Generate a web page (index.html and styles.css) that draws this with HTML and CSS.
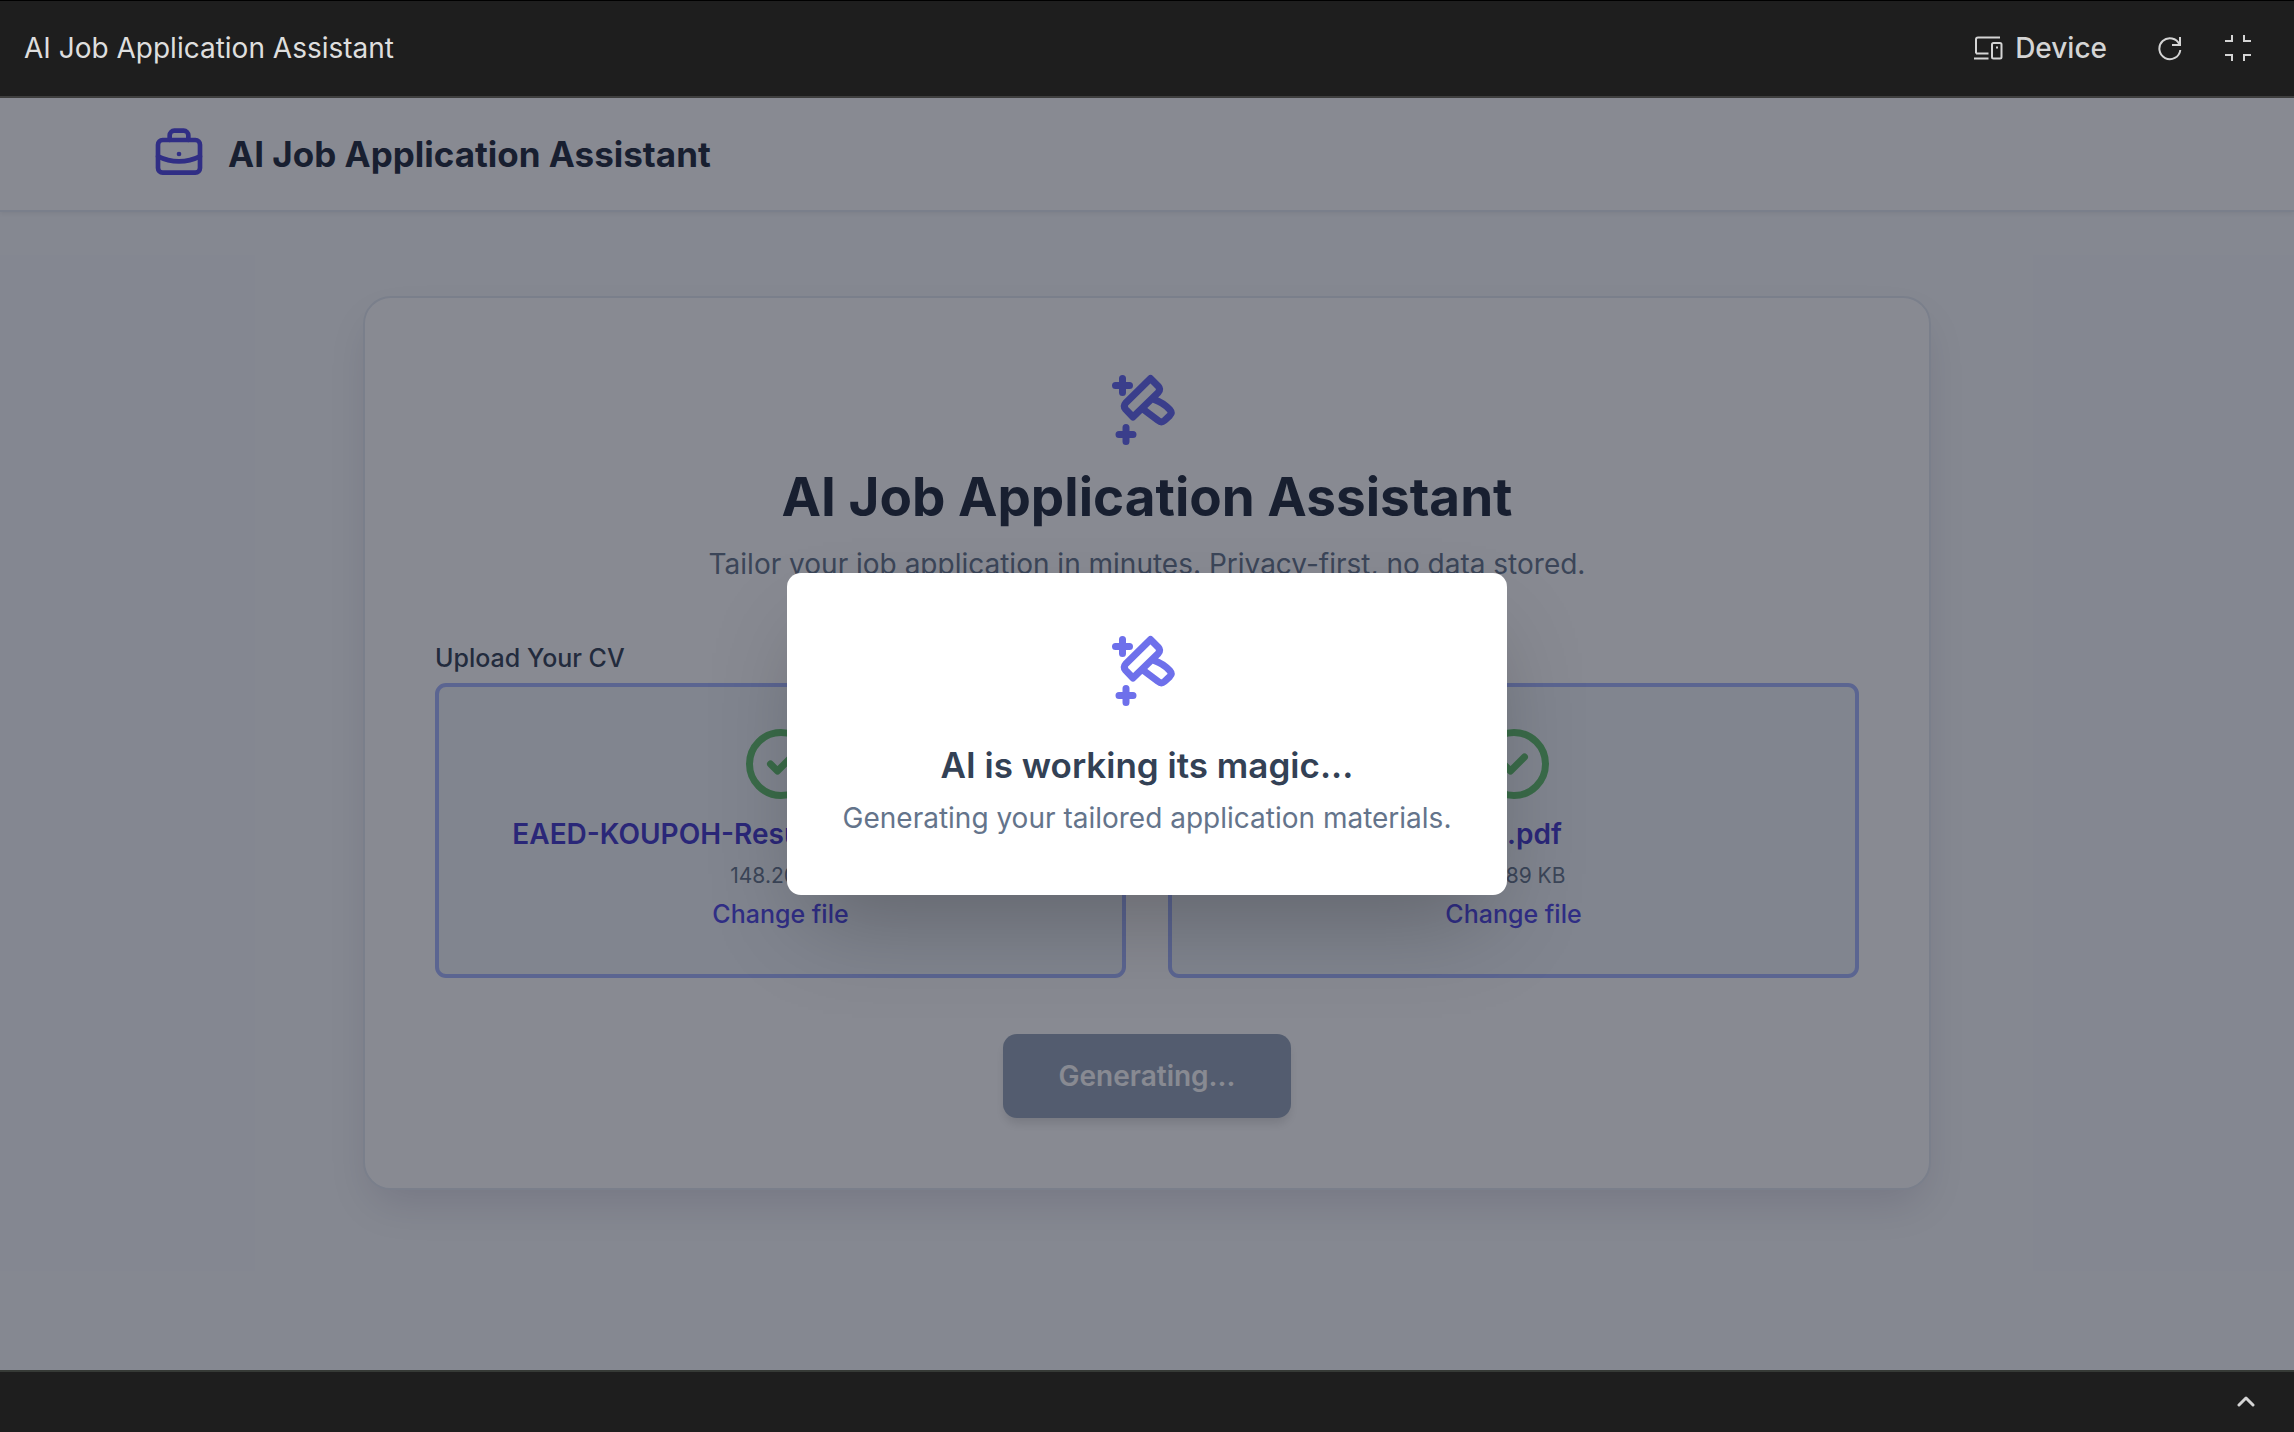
FILE: index.html
```html
<!DOCTYPE html>
<html lang="en">
<head>
<meta charset="utf-8">
<meta name="viewport" content="width=device-width, initial-scale=1">
<title>AI Job Application Assistant</title>
<link rel="stylesheet" href="styles.css">
</head>
<body>
<svg class="defs" aria-hidden="true">
  <symbol id="wand" viewBox="0 0 24 24">
    <path d="M5 3v4M3 5h4M6 17v4M4 19h4M13 3l2.2 2.2q.8.9 0 1.8L8 14l-2.1-2.2q-.8-.9 0-1.8ZM14 9q2.7.9 4.500 2.900q.8.9 0 1.700l-1.500 1.400q-.9.800-1.800 0L11.200 12"/>
  </symbol>
  <symbol id="check" viewBox="0 0 24 24">
    <circle cx="12" cy="12" r="9"/><path d="M9 12l2 2 4-4"/>
  </symbol>
</svg>

<div class="window-bar">
  <span class="window-title">AI Job Application Assistant</span>
  <div class="window-tools">
    <button class="tool device-tool" type="button">
      <svg class="tool-icon device-icon" viewBox="0 0 30 26"><path d="M3 18.500V4.500q0-2 2-2H27M1 23.500H15.500M3 18.500H15.500"/><rect x="19" y="8" width="9.500" height="15.500" rx="1.500"/><path d="M24 11.500v2"/></svg>
      <span>Device</span>
    </button>
    <button class="tool" type="button" aria-label="Reload">
      <svg class="tool-icon" viewBox="0 0 26 26"><path d="M23 2v8h-8M22.500 9.500A10.500 10.500 0 1 0 23.300 15"/></svg>
    </button>
    <button class="tool" type="button" aria-label="Exit full screen">
      <svg class="tool-icon" viewBox="0 0 26 26"><path d="M7 0v6H0M19 0v6h7M7 26v-6H0M19 26v-6h7"/></svg>
    </button>
  </div>
</div>

<div class="preview">
  <header class="site-header">
    <div class="site-brand">
      <svg class="brand-icon" viewBox="0 0 24 24"><rect x="3" y="6" width="18" height="14" rx="2"/><path d="M8 6V4a2 2 0 0 1 2-2h4a2 2 0 0 1 2 2v2M12 12h.01M3 13a20 20 0 0 0 18 0"/></svg>
      <span class="brand-name">AI Job Application Assistant</span>
    </div>
  </header>

  <main class="page">
    <section class="card">
      <div class="intro">
        <svg class="icon-large"><use href="#wand"/></svg>
        <h1 class="intro-title">AI Job Application Assistant</h1>
        <p class="intro-text">Tailor your job application in minutes. Privacy-first, no data stored.</p>
      </div>
      <div class="uploads">
        <div class="upload">
          <h2 class="upload-label">Upload Your CV</h2>
          <div class="dropzone">
            <svg class="icon-large check-icon"><use href="#check"/></svg>
            <p class="file-name">EAED-KOUPOH-Resume-2025-new.pdf</p>
            <p class="file-size">148.20 KB</p>
            <button class="change-file" type="button">Change file</button>
          </div>
        </div>
        <div class="upload">
          <h2 class="upload-label">Job Offer</h2>
          <div class="dropzone">
            <svg class="icon-large check-icon"><use href="#check"/></svg>
            <p class="file-name">job.pdf</p>
            <p class="file-size">248.89 KB</p>
            <button class="change-file" type="button">Change file</button>
          </div>
        </div>
      </div>
      <button class="generate" type="button" disabled>Generating...</button>
    </section>
  </main>

  <div class="overlay">
    <div class="modal" role="dialog" aria-labelledby="modal-title">
      <svg class="icon-large modal-icon"><use href="#wand"/></svg>
      <h2 class="modal-title" id="modal-title">AI is working its magic...</h2>
      <p class="modal-text">Generating your tailored application materials.</p>
    </div>
  </div>
</div>

<div class="console-bar">
  <button class="tool" type="button" aria-label="Open console">
    <svg class="chevron-icon" viewBox="0 0 18 12"><path d="M2 10l7-7 7 7"/></svg>
  </button>
</div>
</body>
</html>
```
FILE: styles.css
```css
* {
  box-sizing: border-box;
}

body {
  margin: 0;
  min-height: 100vh;
  display: flex;
  flex-direction: column;
  font-family: Inter, "Liberation Sans", sans-serif;
  font-size: 28px;
  line-height: 42px;
  color: #1e293b;
  background: #1e1e1e;
}

h1, h2, p {
  margin: 0;
}

button {
  font: inherit;
  border: 0;
  padding: 0;
  background: none;
}

svg {
  display: block;
  flex: none;
  fill: none;
  stroke: currentColor;
  stroke-width: 2;
  stroke-linecap: round;
  stroke-linejoin: round;
}

.defs {
  position: absolute;
  width: 0;
  height: 0;
}

/* Window chrome */
.window-bar {
  height: 98px;
  display: flex;
  align-items: center;
  justify-content: space-between;
  padding: 0 43px 2px 24px;
  border-top: 1px solid #000;
  border-bottom: 2px solid #3f3f3f;
  color: #dedede;
}

.window-tools {
  display: flex;
  align-items: center;
  gap: 42px;
}

.tool {
  display: flex;
  align-items: center;
  gap: 12px;
  color: #d4d4d4;
  font-weight: 500;
}

.device-tool {
  margin-right: 8px;
}

.tool-icon {
  width: 26px;
  height: 26px;
  stroke-linecap: butt;
  stroke-linejoin: miter;
}

.device-icon {
  width: 30px;
}

.console-bar {
  height: 62px;
  display: flex;
  align-items: center;
  justify-content: flex-end;
  padding: 0 39px 2px;
  border-top: 2px solid #363a36;
}

.chevron-icon {
  width: 18px;
  height: 12px;
  stroke-width: 3;
}

/* Application */
.preview {
  position: relative;
  flex: 1;
  display: flex;
  flex-direction: column;
  background: #f8fafc;
}

.site-header {
  padding: 28px;
  background: #fff;
  border-bottom: 2px solid #e2e8f0;
  box-shadow: 0 2px 4px rgb(0 0 0 / 6%);
}

.site-brand {
  max-width: 1992px;
  margin: 0 auto;
  display: flex;
  align-items: center;
  gap: 21px;
}

.brand-icon {
  width: 56px;
  height: 56px;
  color: #4f46e5;
}

.brand-name {
  font-size: 35px;
  line-height: 49px;
  font-weight: 700;
}

.page {
  padding: 84px 28px;
}

.card {
  max-width: 1568px;
  margin: 0 auto;
  padding: 70px;
  display: flex;
  flex-direction: column;
  gap: 56px;
  background: #fff;
  border: 2px solid #e2e8f0;
  border-radius: 28px;
  box-shadow: 0 20px 44px -9px rgb(30 0 60 / 14%);
}

.icon-large {
  width: 84px;
  height: 84px;
  color: #6366f1;
}

.intro {
  display: flex;
  flex-direction: column;
  align-items: center;
  gap: 14px;
  text-align: center;
}

.intro-title {
  font-size: 53px;
  line-height: 63px;
  font-weight: 700;
}

.intro-text {
  color: #64748b;
}

.uploads {
  display: grid;
  grid-template-columns: 1fr 1fr;
  gap: 42px;
}

.upload-label {
  margin-bottom: 7px;
  font-size: 25px;
  line-height: 35px;
  font-weight: 500;
  color: #334155;
}

.dropzone {
  display: flex;
  flex-direction: column;
  align-items: center;
  gap: 7px;
  padding: 35px 28px 42px;
  background: #f1f5f9;
  border: 4px solid #a5b4fc;
  border-radius: 11px;
}

.check-icon {
  color: #62c16c;
}

.file-name {
  font-weight: 600;
  color: #4338ca;
}

.file-size {
  font-size: 21px;
  line-height: 28px;
  color: #64748b;
}

.change-file {
  font-size: 25px;
  line-height: 35px;
  font-weight: 500;
  color: #4f46e5;
}

.generate {
  align-self: center;
  padding: 21px 56px;
  font-weight: 600;
  color: #fff;
  background: #94a3b8;
  border-radius: 14px;
  box-shadow: 0 7px 11px -2px rgb(0 0 0 / 14%);
}

/* Progress dialog */
.overlay {
  position: absolute;
  inset: 0;
  display: flex;
  align-items: center;
  justify-content: center;
  background: rgb(17 21 38 / 50%);
}

.modal {
  padding: 56px;
  display: flex;
  flex-direction: column;
  align-items: center;
  text-align: center;
  background: #fff;
  border-radius: 14px;
  box-shadow: 0 44px 88px -21px rgb(0 0 0 / 25%);
}

.modal-icon {
  color: #6e70eb;
}

.modal-title {
  margin: 28px 0 7px;
  font-size: 35px;
  line-height: 49px;
  font-weight: 600;
  color: #334155;
}

.modal-text {
  color: #64748b;
}
```
